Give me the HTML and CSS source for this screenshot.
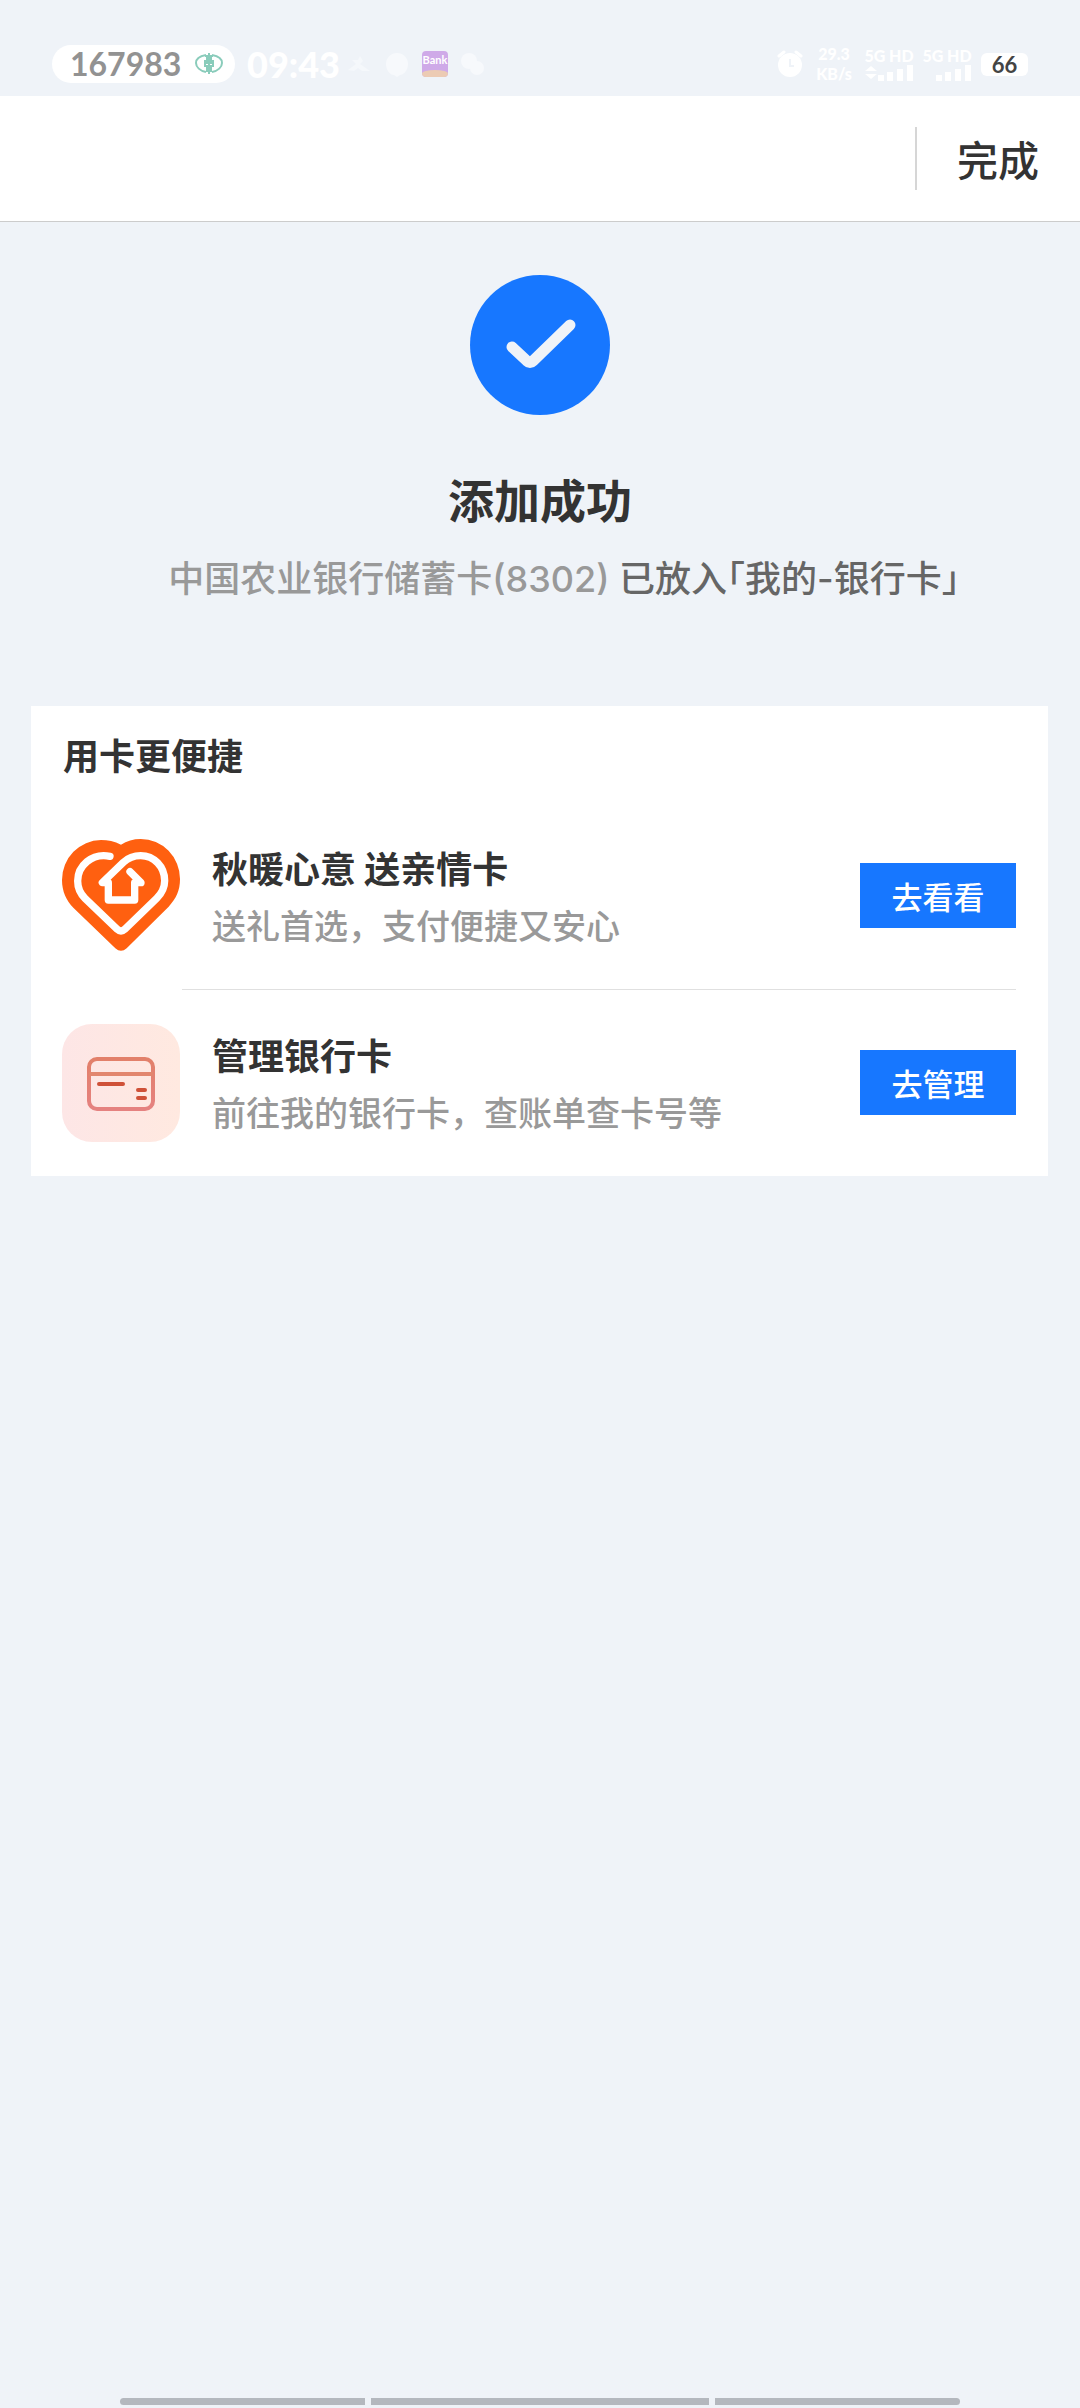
FILE: index.html
```html
<!DOCTYPE html>
<html lang="zh-CN">
<head>
<meta charset="utf-8">
<meta name="viewport" content="width=device-width, initial-scale=1">
<title>添加成功</title>
<link rel="stylesheet" href="styles.css">
</head>
<body>
<div class="status">
  <div class="status-group">
    <div class="pill">
      <span>167983</span>
      <svg class="pill-icon" viewBox="0 0 28 22" fill="none" stroke="#8accbb" stroke-width="2">
        <path d="M11 2C5 3 1 6 1 10s4 8 10 9M17 2c6 1 10 4 10 8s-4 8-10 9"/>
        <path d="M14 0v21M10 8h8v5h-8zM10 3h2v5M18 3h-2v5M12 13v6M16 13v6M11 10h6"/>
      </svg>
    </div>
    <time class="clock">09:43</time>
    <svg class="app-icon" viewBox="0 0 26 28" fill="#f5f8fb"><path d="M2 20l8-6-4-4h6l2-4 3 5-3 3 10 7h-8l-4-3-4 3z"/></svg>
    <svg class="app-icon" viewBox="0 0 26 28" fill="#f7f9fc"><path d="M13 3a11 11 0 0 1 11 11c0 7-5 11-8 11l-3 2-3-2C6 25 2 20 2 14A11 11 0 0 1 13 3z"/></svg>
    <div class="bank"><span class="bank-name">Bank</span><span class="bank-foot"></span></div>
    <svg class="app-icon" viewBox="0 0 26 28" fill="#f7f9fc"><circle cx="9" cy="11" r="8"/><circle cx="17" cy="18" r="7"/></svg>
  </div>
  <div class="status-group right">
    <svg class="alarm" viewBox="0 0 26 28"><g fill="none" stroke="#fff" stroke-width="3" stroke-linecap="round"><path d="M2 6l5-4M24 6l-5-4"/></g><circle cx="13" cy="15" r="12" fill="#fff"/><path d="M13 9v7h4" fill="none" stroke="#eff3f8" stroke-width="2"/></svg>
    <div class="speed"><span>29.3</span><span>KB/s</span></div>
    <div class="signal"><span>5G HD</span><svg viewBox="0 0 48 16" fill="#fff"><path d="M0 6l6-5 6 5zM0 9l6 5 6-5zM13 10h6v6h-6zM22 7h6v9h-6zM32 4h6v12h-6zM42 0h6v16h-6z"/></svg></div>
    <div class="signal"><span>5G HD</span><svg viewBox="0 0 48 16" fill="#fff"><path d="M13 10h6v6h-6zM22 7h6v9h-6zM32 4h6v12h-6zM42 0h6v16h-6z"/></svg></div>
    <div class="battery">66</div>
  </div>
</div>

<header class="topbar">
  <button class="done" type="button">完成</button>
</header>

<main>
  <section class="result">
    <svg class="result-icon" viewBox="0 0 140 140"><circle cx="70" cy="70" r="70" fill="#1777ff"/><path d="M42 72l15 14q3 3 6 0l37-36" fill="none" stroke="#eff3f8" stroke-width="11" stroke-linecap="round" stroke-linejoin="round"/></svg>
    <h1>添加成功</h1>
    <p class="result-text"><span class="bank-card">中国农业银行储蓄卡(8302)</span> <span class="placed">已放入「我的-银行卡」</span></p>
  </section>

  <section class="card">
    <h2>用卡更便捷</h2>
    <ul>
      <li class="row">
        <svg class="row-icon" viewBox="66 51 354 354">
          <path fill="#ff6010" d="M243 74C224 63 203 60 183 60A118 120 0 0 0 66 180C66 214 79 242 100 263L226 385Q243 400 260 385L386 260C408 236 420 212 420 178A118 120 0 0 0 302 57C280 57 260 63 243 74z"/>
          <path fill="none" stroke="#fff" stroke-width="22" stroke-linecap="round" stroke-linejoin="round" d="M210 109C155 98 113 138 113 183C113 205 121 221 135 235L232 328Q243 338 254 328L350 235C367 218 374 201 374 182C374 140 342 107 302 107C280 107 263 115 250 127L187 188H205V240H284V188H303L270 155"/>
        </svg>
        <div class="row-text"><h3>秋暖心意 送亲情卡</h3><p>送礼首选，支付便捷又安心</p></div>
        <button class="go" type="button">去看看</button>
      </li>
      <li class="row">
        <svg class="row-icon" viewBox="0 0 118 118" fill="none" stroke-width="4">
          <defs>
            <linearGradient id="tile" x1="0" x2="1" y1="0" y2="0"><stop stop-color="#fde6e6"/><stop offset="1" stop-color="#ffe9e0"/></linearGradient>
            <linearGradient id="outline" x1="0" x2="0" y1="0" y2="1"><stop stop-color="#e2806a"/><stop offset="1" stop-color="#e58280"/></linearGradient>
          </defs>
          <rect width="118" height="118" rx="30" fill="url(#tile)"/>
          <rect x="27" y="35" width="64" height="50" rx="8" stroke="url(#outline)"/>
          <path d="M27 50h64" stroke="#e2866e"/>
          <path d="M37 60h24M76 66h7M76 74h7" stroke="#cf5138" stroke-linecap="round"/>
        </svg>
        <div class="row-text"><h3>管理银行卡</h3><p>前往我的银行卡，查账单查卡号等</p></div>
        <button class="go" type="button">去管理</button>
      </li>
    </ul>
  </section>
</main>

<div class="navbar"><span class="nav-side"></span><span class="nav-mid"></span><span class="nav-side"></span></div>
</body>
</html>
```
FILE: styles.css
```css
* { box-sizing: border-box; }
body {
  margin: 0;
  min-height: 100vh;
  display: flex;
  flex-direction: column;
  background: #eff3f8;
  color: #333;
  font-family: "Noto Sans CJK SC", sans-serif;
}
h1, h2, h3, p, ul { margin: 0; padding: 0; }
ul { list-style: none; }
button { border: 0; padding: 0; font-family: inherit; cursor: pointer; }
svg { display: block; flex: none; }

.status {
  height: 96px;
  padding: 32px 52px 0;
  display: flex;
  justify-content: space-between;
  font-family: Lato, sans-serif;
  font-weight: 700;
  color: #fff;
}
.status-group { display: flex; align-items: center; gap: 12px; height: 64px; }
.right { gap: 10px; }
.pill {
  width: 183px;
  height: 38px;
  padding: 0 12px 0 18px;
  display: flex;
  align-items: center;
  justify-content: space-between;
  border-radius: 19px;
  background: #fff;
  color: #929292;
  font-size: 32px;
  line-height: 38px;
}
.pill-icon { width: 28px; height: 22px; }
.clock { font-size: 36px; font-weight: 900; line-height: 36px; }
.app-icon { width: 26px; height: 28px; }
.clock + .app-icon { margin-left: -6px; }
.bank {
  width: 26px;
  height: 26px;
  border-radius: 4px;
  overflow: hidden;
  background: #cfaae8;
  display: flex;
  flex-direction: column;
  justify-content: space-between;
}
.bank-name { font-size: 11px; line-height: 18px; text-align: center; }
.bank-foot { height: 7px; border-radius: 50% 50% 0 0; background: #eccbb4; }
.alarm { width: 26px; height: 28px; }
.speed, .signal { display: flex; flex-direction: column; align-items: center; font-size: 16px; font-weight: 900; line-height: 18px; }
.speed { width: 42px; line-height: 20px; }
.signal { width: 48px; white-space: nowrap; }
.signal svg { width: 48px; height: 16px; }
.battery {
  width: 47px;
  height: 23px;
  border-radius: 6px;
  background: #fff;
  color: #444;
  font-size: 22px;
  line-height: 23px;
  text-align: center;
}

.topbar {
  height: 126px;
  display: flex;
  align-items: center;
  justify-content: flex-end;
  background: #fff;
  border-bottom: 1px solid #ccc;
}
.done {
  height: 63px;
  padding: 0 41px 0 40px;
  border-left: 2px solid #d6d6d6;
  background: none;
  color: #333;
  font-size: 41px;
  font-weight: 500;
  line-height: 63px;
}

main { flex: 1; }
.result { display: flex; flex-direction: column; align-items: center; padding-top: 53px; }
.result-icon { width: 140px; height: 140px; }
h1 { margin-top: 48px; font-size: 46px; line-height: 70px; }
.result-text {
  margin-top: 20px;
  padding-left: 48px;
  font-family: Inter, "Noto Sans CJK SC", sans-serif;
  font-size: 36px;
  font-weight: 500;
  line-height: 52px;
}
.bank-card { color: #999; }
.placed { color: #666; font-feature-settings: "halt"; }

.card { margin: 101px 32px 0 31px; padding: 0 32px 0 31px; background: #fff; }
h2 { height: 96px; padding-left: 1px; font-size: 36px; line-height: 96px; }
.row { height: 187px; display: flex; align-items: center; }
.row + .row {
  background: linear-gradient(#e0e0e0, #e0e0e0) 120px 0 / 100% 1px no-repeat;
}
.row-icon { width: 118px; height: 118px; }
.row-text { flex: 1; margin-left: 32px; }
h3 { font-size: 36px; line-height: 58px; }
.row-text p { color: #999; font-size: 34px; font-weight: 500; line-height: 58px; }
.go {
  width: 156px;
  height: 65px;
  background: #1777ff;
  color: #fff;
  font-size: 31px;
  font-weight: 500;
  line-height: 65px;
}

.navbar { display: flex; gap: 6px; padding: 0 120px 3px; }
.navbar span { height: 7px; background: #b4b8be; }
.nav-side { flex: 245; }
.nav-mid { flex: 338; }
.nav-side:first-child { border-radius: 4px 0 0 4px; }
.nav-side:last-child { border-radius: 0 4px 4px 0; }
```
